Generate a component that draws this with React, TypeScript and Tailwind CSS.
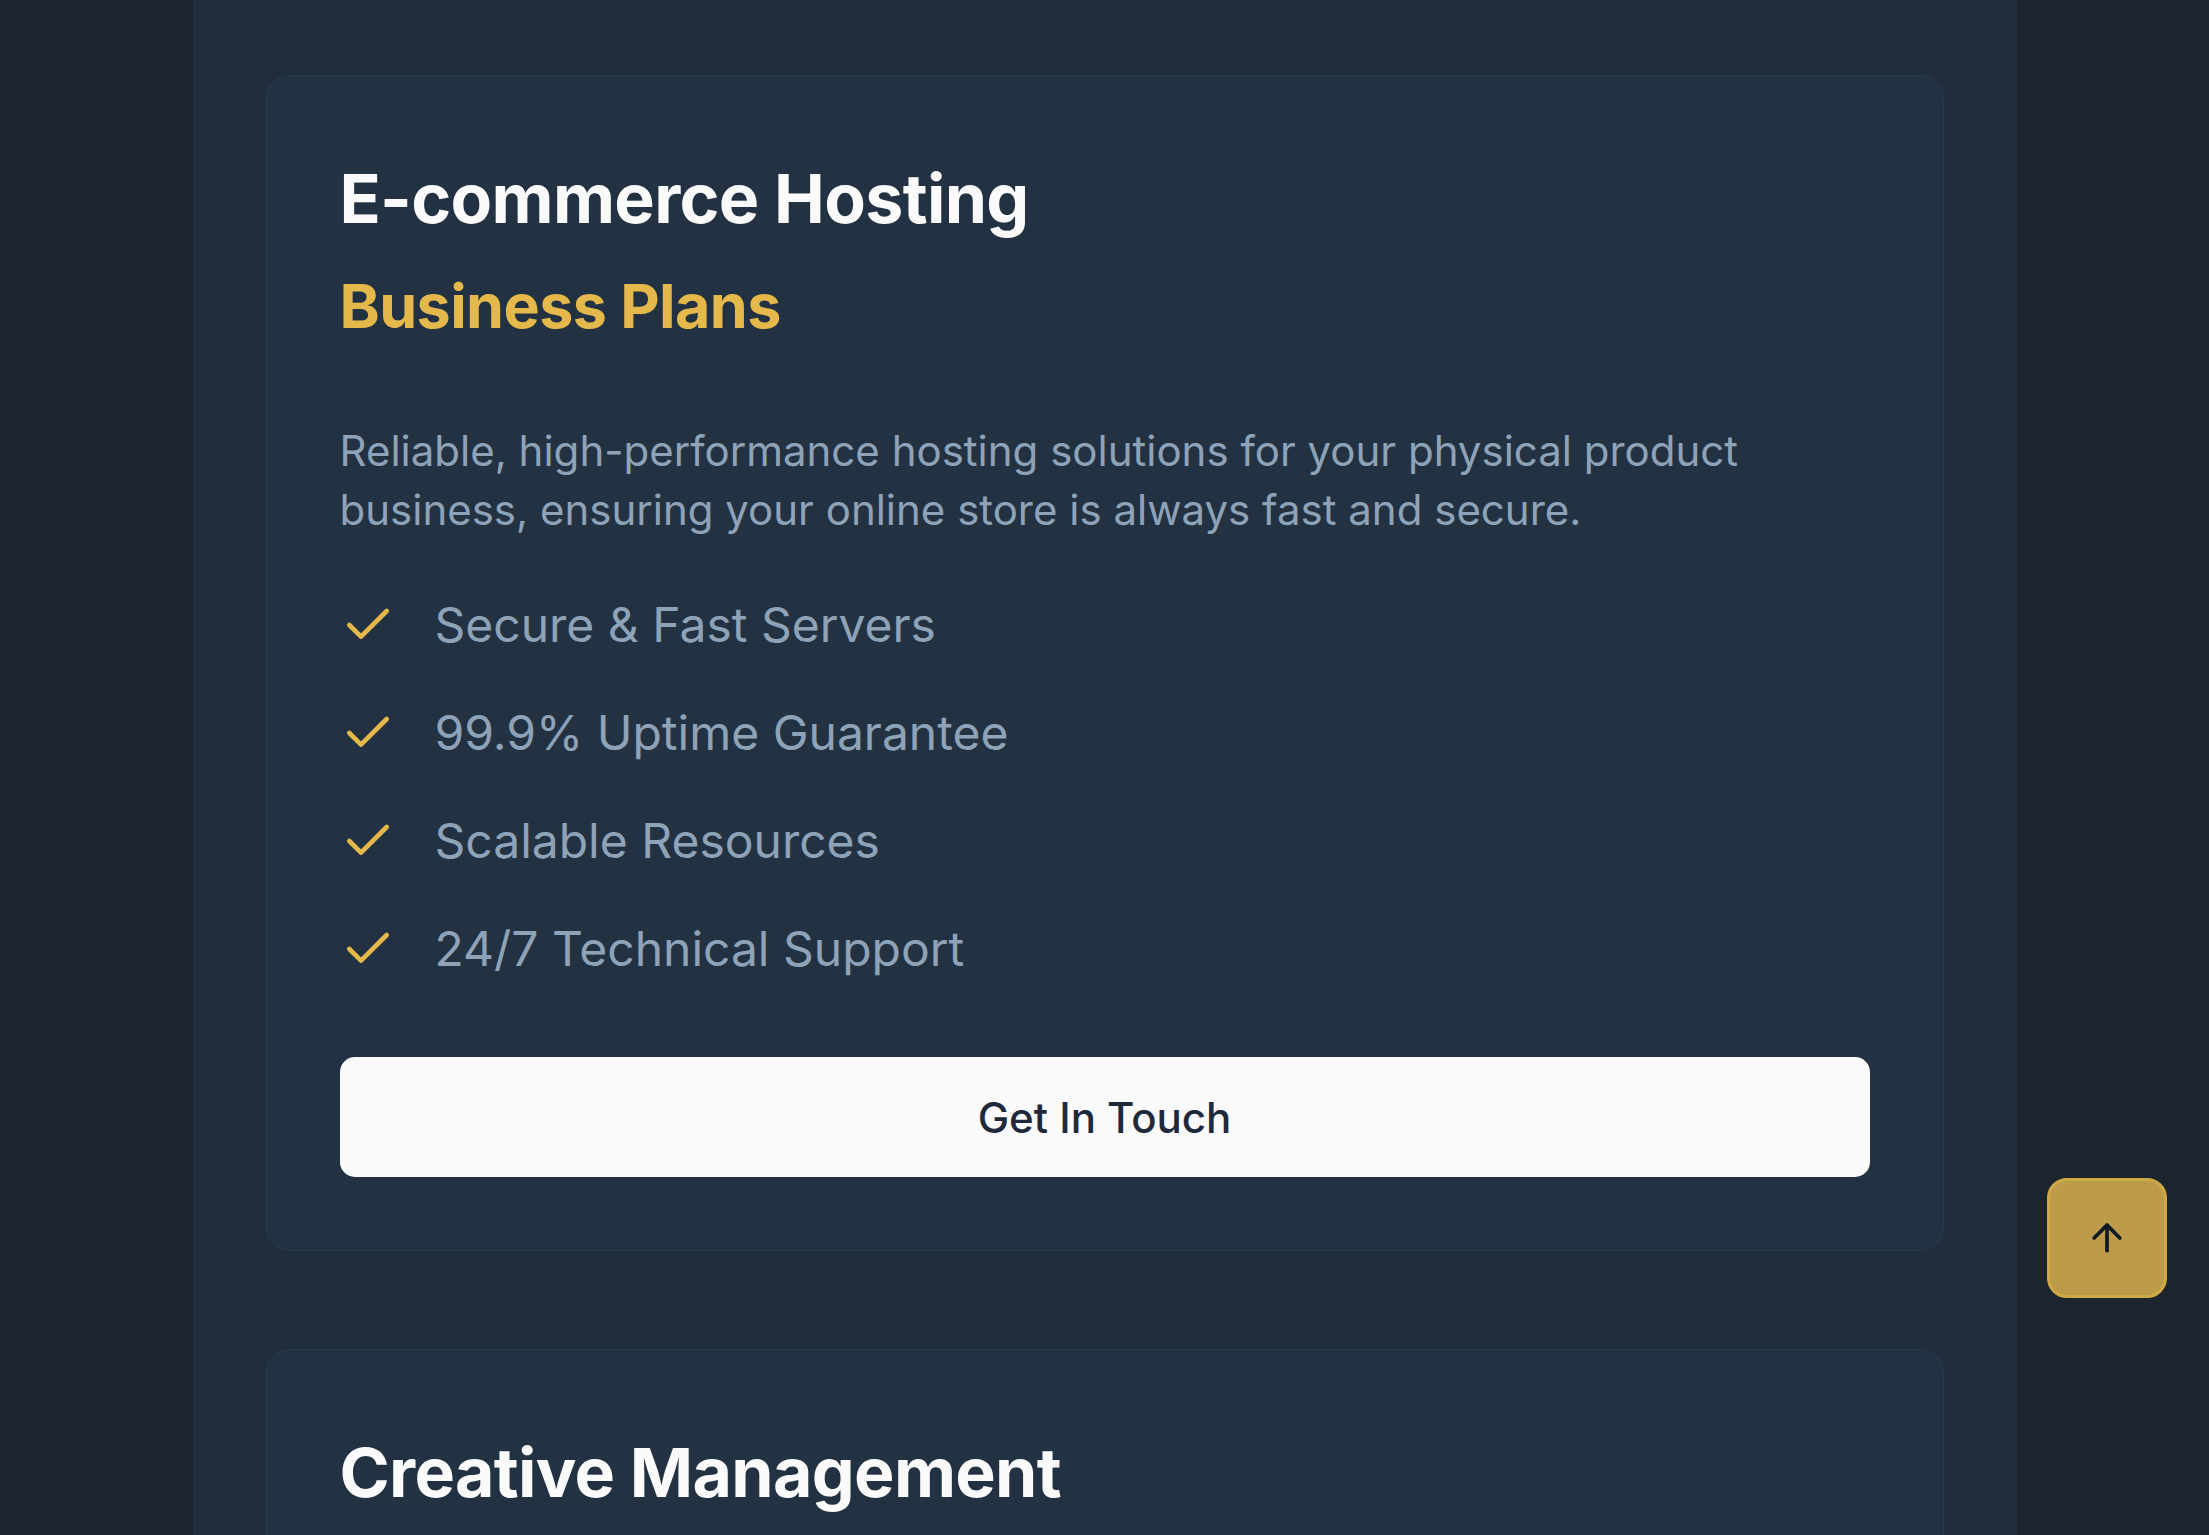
import React from 'react'
import { Check, ArrowUp } from 'lucide-react'

interface Plan {
  title: string
  subtitle: string
  description: string
  features: string[]
}

const plans: Plan[] = [
  {
    title: 'E-commerce Hosting',
    subtitle: 'Business Plans',
    description:
      'Reliable, high-performance hosting solutions for your physical product business, ensuring your online store is always fast and secure.',
    features: ['Secure & Fast Servers', '99.9% Uptime Guarantee', 'Scalable Resources', '24/7 Technical Support'],
  },
  {
    title: 'Creative Management',
    subtitle: 'Agency Plans',
    description:
      'Flexible tools and dedicated support to help creative teams manage projects, clients and assets in one place.',
    features: ['Project Dashboards', 'Client Collaboration', 'Asset Storage', 'Priority Support'],
  },
]

function PlanCard({ plan }: { plan: Plan }) {
  return (
    <div className="bg-[#233242] border border-[#2b3a4b] rounded-[24px] px-[73px] pt-[75px] pb-[73px]">
      {/* 标题 */}
      <h2 className="mt-[13px] text-[68px] leading-[68px] font-bold tracking-[-0.01em] text-[#fafafa]">
        {plan.title}
      </h2>
      <h3 className="mt-[44px] text-[61px] leading-[61px] font-bold tracking-[-0.01em] text-[#e5b84b]">
        {plan.subtitle}
      </h3>

      {/* 描述 */}
      <p className="mt-[84px] max-w-[1460px] text-[42px] leading-[59px] text-[#8ea2b8]">{plan.description}</p>

      {/* 功能列表 */}
      <ul className="mt-[58px] flex flex-col gap-[52px]">
        {plan.features.map((f) => (
          <li key={f} className="flex items-center gap-[39px]">
            <Check className="w-[56px] h-[56px] shrink-0 text-[#e5b84b]" strokeWidth={2} />
            <span className="text-[48px] leading-[56px] text-[#8ea2b8]">{f}</span>
          </li>
        ))}
      </ul>

      <button className="mt-[80px] w-full h-[120px] rounded-[15px] bg-[#fafafa] text-[42px] font-medium text-[#1e293b]">
        Get In Touch
      </button>
    </div>
  )
}

export default function App() {
  return (
    <div className="min-h-screen bg-[#1c242e]" style={{ fontFamily: 'Inter, "Noto Sans", sans-serif' }}>
      <div className="mx-auto w-[1824px] min-h-screen bg-[#202d3b] px-[73px] pt-[75px] pb-[100px]">
        <div className="flex flex-col gap-[98px]">
          {plans.map((p) => (
            <PlanCard key={p.title} plan={p} />
          ))}
        </div>
      </div>

      {/* 返回顶部按钮 */}
      <button className="fixed right-[42px] bottom-[237px] w-[120px] h-[120px] rounded-[20px] border-[3px] border-[#cfa946] bg-[#bc9c48] flex items-center justify-center">
        <ArrowUp className="w-[44px] h-[44px] text-[#111827]" strokeWidth={2} />
      </button>
    </div>
  )
}
